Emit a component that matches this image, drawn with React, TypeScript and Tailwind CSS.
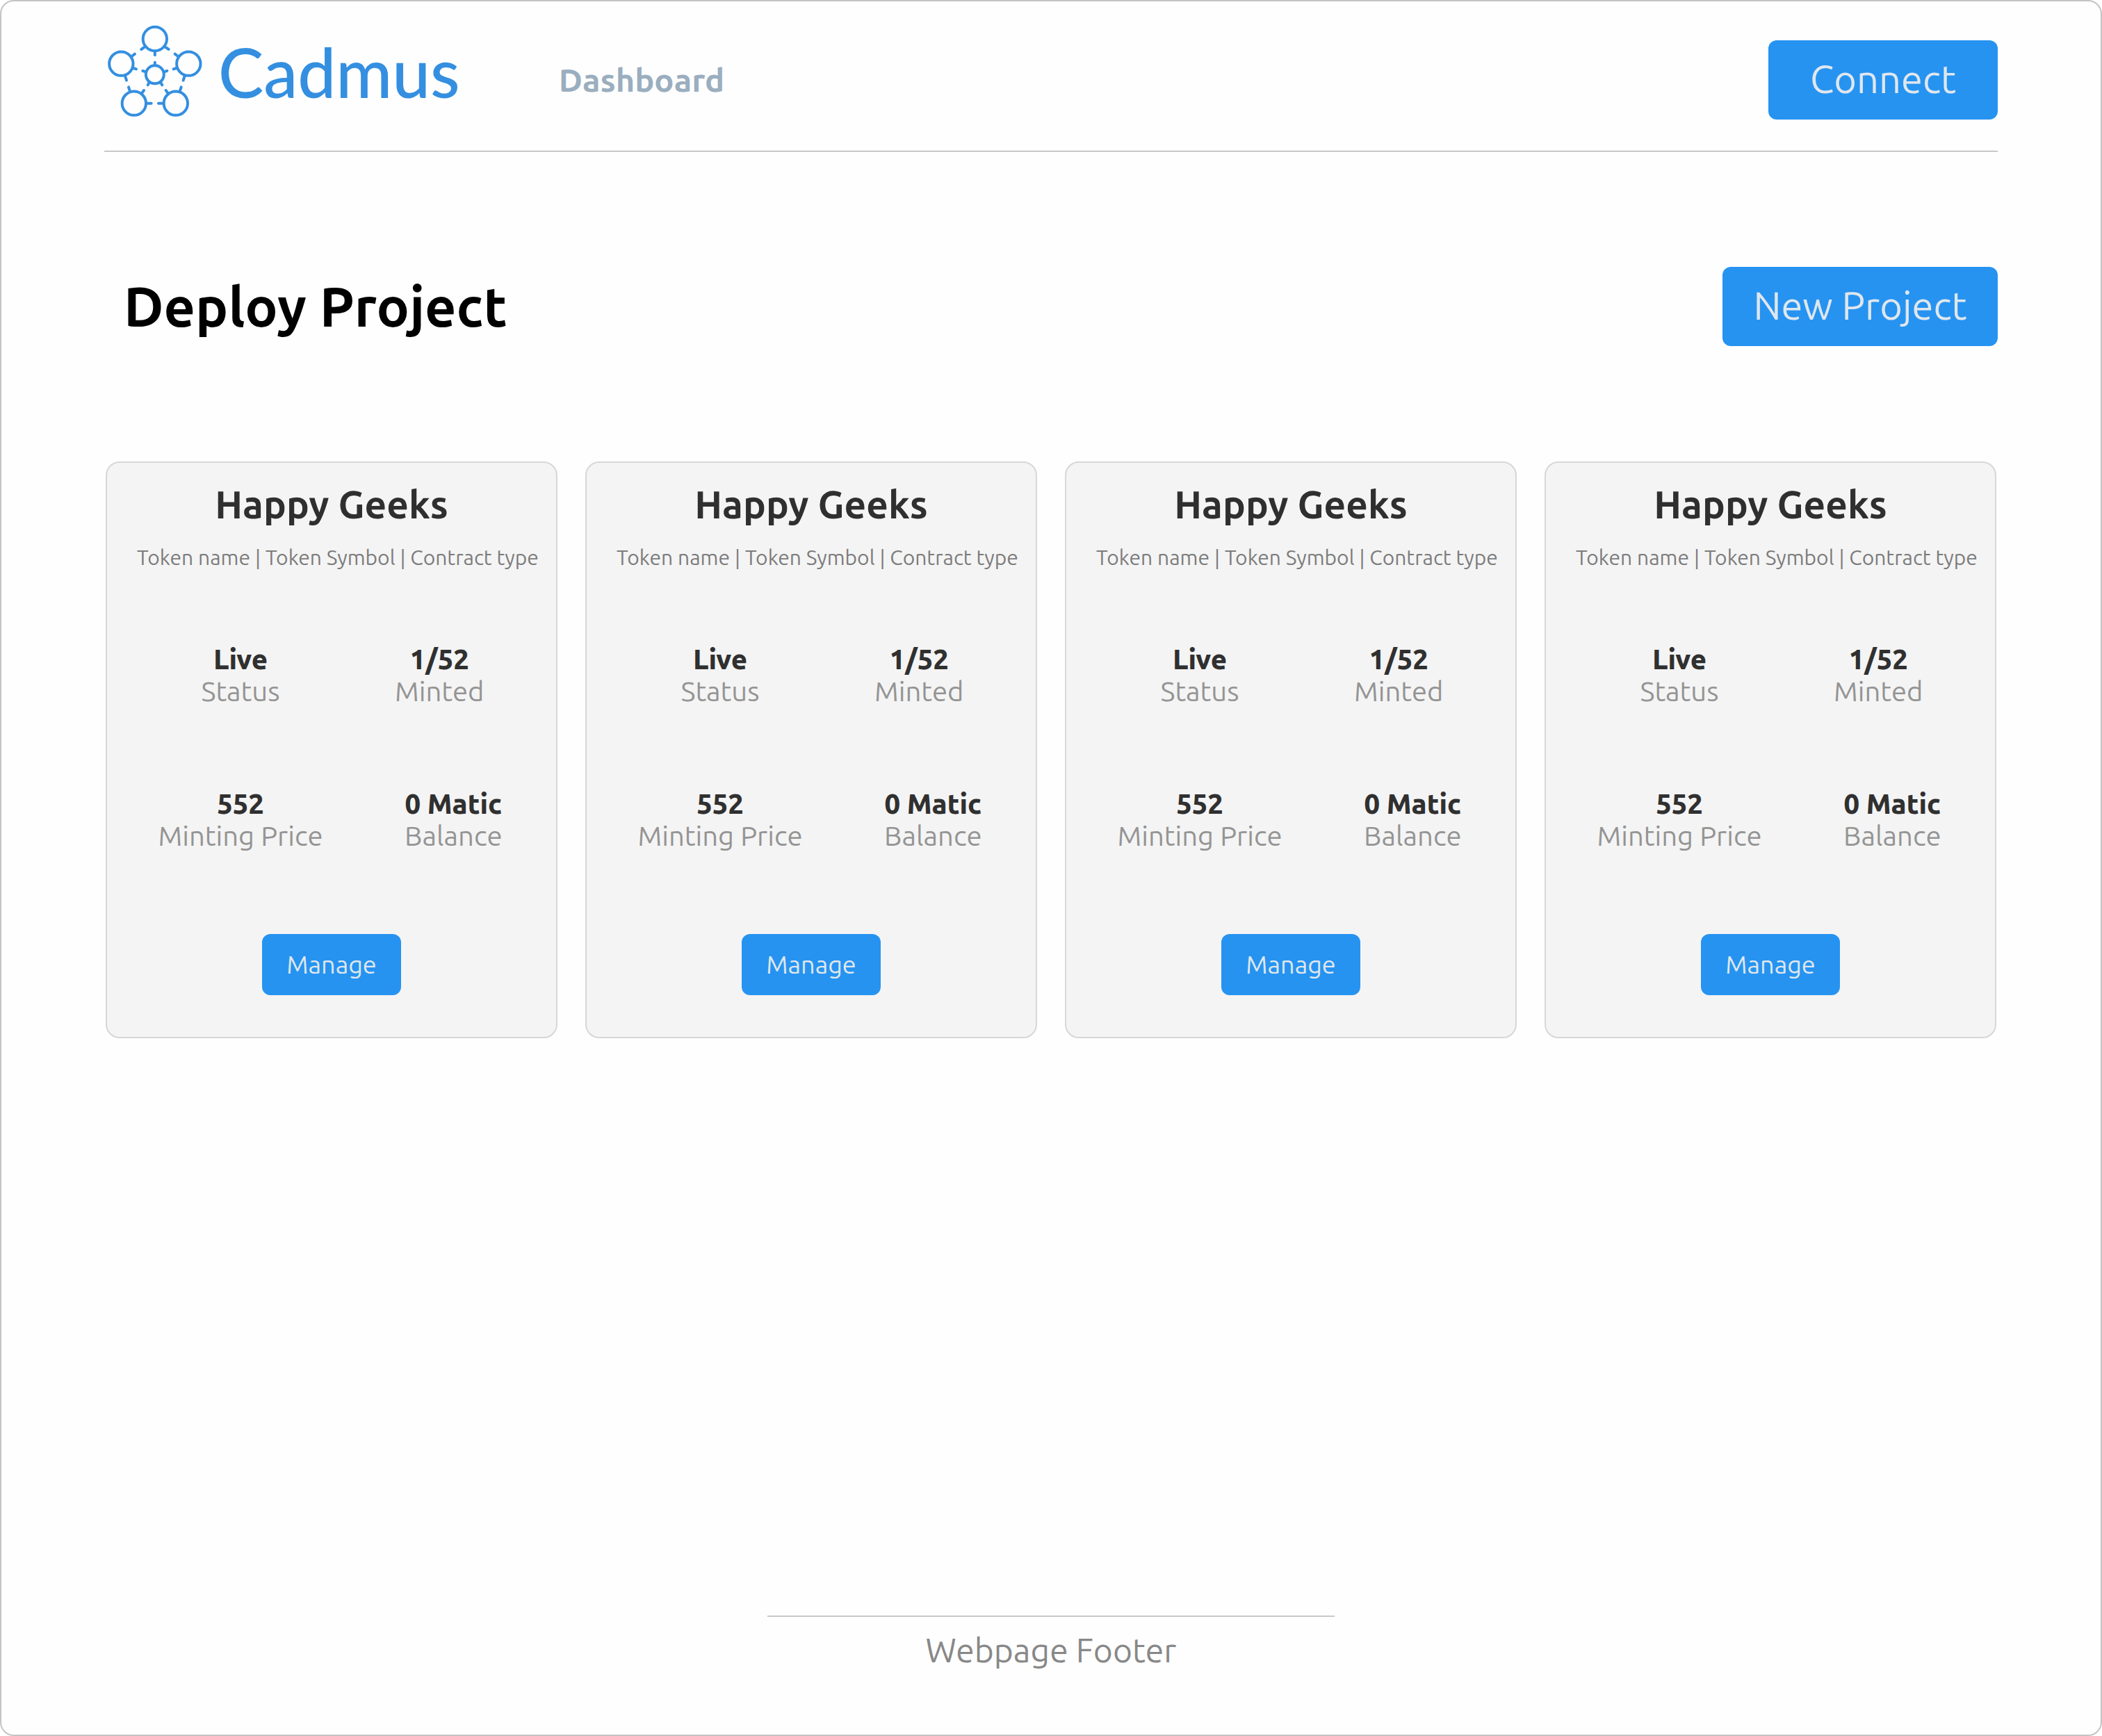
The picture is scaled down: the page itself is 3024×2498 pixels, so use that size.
import React from "react";

type Project = {
  id: number;
  name: string;
  details: string;
  status: string;
  minted: string;
  price: string;
  balance: string;
};

const projects: Project[] = [1, 2, 3, 4].map((id) => ({
  id,
  name: "Happy Geeks",
  details: "Token name | Token Symbol | Contract type",
  status: "Live",
  minted: "1/52",
  price: "552",
  balance: "0 Matic",
}));

function LogoMark() {
  return (
    <svg
      className="h-[133px] w-[138px] shrink-0"
      viewBox="42 48 414 399"
      fill="none"
      stroke="currentColor"
      strokeWidth="12"
      strokeLinecap="round"
      aria-hidden="true"
    >
      <circle cx="248.500" cy="108" r="51.500" />
      <circle cx="103" cy="215" r="51.500" />
      <circle cx="394" cy="215" r="51.500" />
      <circle cx="158.500" cy="386" r="51.500" />
      <circle cx="338.500" cy="386" r="51.500" />
      <circle cx="248.500" cy="262" r="39" />
      <path d="M204 143L190 153M293 143L308 153M248.500 162V178" />
      <path d="M248.500 222V209M209 250L196 246M288 250L301 246M224 296L218 307M273 296L280 307" />
      <path d="M149 183L162 173M155 234L168 238M120 268L126 287" />
      <path d="M348 183L335 173M342 234L329 238M377 268L371 287" />
      <path d="M141 334L135 316M191 344L201 330M212 386H233" />
      <path d="M356 334L362 316M306 344L296 330M285 386H264" />
    </svg>
  );
}

function Stat({ value, label, className }: { value: string; label: string; className?: string }) {
  return (
    <div className={className}>
      <dd className="font-extrabold text-[#303030]">{value}</dd>
      <dt className="text-[#949494]">{label}</dt>
    </div>
  );
}

function ProjectCard({ project }: { project: Project }) {
  return (
    <article className="flex flex-col items-center rounded-[20px] border-2 border-[#d7d7d7] bg-[#f4f4f4] pt-7 pb-[60px]">
      <h2 className="text-[55px] leading-[64px] font-semibold text-[#2f2f2f]">{project.name}</h2>
      <p className="mt-6 pl-[18px] text-[30px] leading-10 whitespace-nowrap text-[#7c7c7c]">{project.details}</p>
      <dl className="mt-[104px] flex flex-col gap-[116px] self-stretch pl-[72px] text-center text-[40px] leading-[46px] whitespace-nowrap">
        <div className="flex gap-[102px]">
          <Stat className="w-[240px]" value={project.status} label="Status" />
          <Stat value={project.minted} label="Minted" />
        </div>
        <div className="flex gap-[116px]">
          <Stat className="w-[240px]" value={project.price} label="Minting Price" />
          <Stat value={project.balance} label="Balance" />
        </div>
      </dl>
      <button
        type="button"
        className="mt-[118px] h-[88px] w-[200px] rounded-xl bg-[#2693f1] text-[36px] text-[#dfe7ed]"
      >
        Manage
      </button>
    </article>
  );
}

export default function App() {
  return (
    <div className="bg-white font-['Ubuntu','Noto_Sans',sans-serif]">
      <div className="flex min-h-screen flex-col rounded-[20px] border-2 border-[#c4c4c4] bg-[#fefefe] px-[148px]">
        <header className="flex items-start border-b border-[#9b9b9b] pb-[45px]">
          <a href="#" className="mt-[34px] flex h-[133px] items-center gap-[22px] pl-1 text-[#348fe0]">
            <LogoMark />
            <span className="font-['Lato',sans-serif] text-[98px] leading-none font-medium">Cadmus</span>
          </a>
          <nav className="mt-14 ml-[142px] flex h-[114px] items-center">
            <a href="#" className="text-[47px] leading-[60px] font-semibold text-[#9aaebf]">
              Dashboard
            </a>
          </nav>
          <button
            type="button"
            className="mt-14 ml-auto h-[114px] w-[330px] rounded-xl bg-[#2693f1] pb-0.5 text-[56px] text-[#dfe7ed]"
          >
            Connect
          </button>
        </header>

        <main className="flex-1">
          <div className="mt-[166px] flex items-center justify-between pl-7">
            <h1 className="text-[79px] leading-[100px] font-semibold text-black">Deploy Project</h1>
            <button
              type="button"
              className="h-[114px] w-[396px] rounded-xl bg-[#2693f1] pb-0.5 text-[56px] text-[#dfe7ed]"
            >
              New Project
            </button>
          </div>
          <section aria-label="Projects" className="mt-[166px] grid grid-cols-4 gap-10 px-0.5">
            {projects.map((project) => (
              <ProjectCard key={project.id} project={project} />
            ))}
          </section>
        </main>

        <footer className="mx-auto w-[816px] border-t border-[#9b9b9b] pt-4 pb-[90px] text-center text-[48px] leading-[64px] text-[#888888]">
          Webpage Footer
        </footer>
      </div>
    </div>
  );
}
